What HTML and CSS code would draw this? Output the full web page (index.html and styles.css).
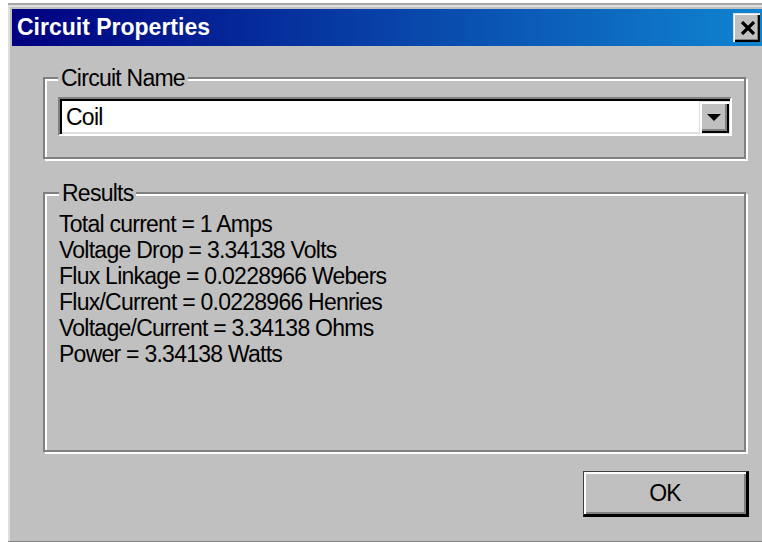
FILE: index.html
```html
<!DOCTYPE html>
<html lang="en">
<head>
<meta charset="utf-8">
<title>Circuit Properties</title>
<link rel="stylesheet" href="styles.css">
</head>
<body>
<div class="window">
  <div class="titlebar">
    <span class="title">Circuit Properties</span>
    <button class="close" type="button" aria-label="Close">
      <svg width="16" height="14" viewBox="0 0 16 14">
        <path d="M2 1 L14 13 M14 1 L2 13" stroke="#000" stroke-width="3.2" fill="none"/>
      </svg>
    </button>
  </div>
  <div class="content">
    <fieldset class="group name-group">
      <legend>Circuit Name</legend>
      <div class="combo">
        <span class="combo-value">Coil</span>
        <span class="combo-btn">
          <svg width="14" height="7" viewBox="0 0 14 7"><polygon points="0,0 14,0 7,7" fill="#000"/></svg>
        </span>
      </div>
    </fieldset>
    <fieldset class="group results-group">
      <legend>Results</legend>
      <ul class="results">
        <li>Total current = 1 Amps</li>
        <li>Voltage Drop = 3.34138 Volts</li>
        <li>Flux Linkage = 0.0228966 Webers</li>
        <li>Flux/Current = 0.0228966 Henries</li>
        <li>Voltage/Current = 3.34138 Ohms</li>
        <li>Power = 3.34138 Watts</li>
      </ul>
    </fieldset>
    <div class="actions">
      <button class="ok" type="button">OK</button>
    </div>
  </div>
</div>
</body>
</html>
```

FILE: styles.css
```css
html, body {
  margin: 0;
  padding: 0;
  background: #fff;
  overflow: hidden;
}

body {
  font-family: "Liberation Sans", Arial, sans-serif;
  font-size: 23px;
  letter-spacing: -0.75px;
  color: #000;
}

/* dialog frame */
.window {
  box-sizing: border-box;
  margin: 3px 0 0 8px;
  width: 754px;
  height: 539px;
  padding: 4px 0 0 4px;
  background: #c0c0c0;
  border-top: 2px solid #a6a6a6;
  border-bottom: 1px solid #808080;
  box-shadow: inset 2px 2px #dfdfdf;
  display: flex;
  flex-direction: column;
  overflow: hidden;
}

.titlebar {
  height: 37px;
  flex: none;
  display: flex;
  align-items: center;
  justify-content: space-between;
  padding: 0 2px 0 5px;
  background: linear-gradient(to right, #000080 0%, #1084d0 100%);
}

.title {
  font-weight: bold;
  font-size: 23px;
  letter-spacing: 0;
  color: #fff;
  line-height: 1;
}

.close {
  width: 27px;
  height: 29px;
  padding: 0 0 0 3px;
  margin: 0;
  border: 0;
  background: #c0c0c0;
  box-shadow: inset 1px 1px #dfdfdf, inset 2px 2px #fff, inset -2px -2px #000, inset -3px -3px #808080;
  display: flex;
  align-items: center;
  justify-content: center;
}

.content {
  flex: 1;
  display: flex;
  flex-direction: column;
}

/* etched group boxes */
.group {
  margin: 0 16px 0 31px;
  border: 2px solid #808080;
  box-shadow: inset 2px 2px #fff, 2px 2px #fff;
  min-width: 0;
}

.group legend {
  font-size: 23px;
  line-height: 28px;
  padding: 0 3px;
  background: #c0c0c0;
}

.name-group {
  margin-top: 18px;
  padding: 5px 12px 21px 13px;
}

.results-group {
  margin-top: 20px;
  padding: 4px 12px 83px 14px;
}

/* drop-down list */
.combo {
  box-sizing: border-box;
  height: 39px;
  display: flex;
  align-items: stretch;
  padding: 2px 1px 1px 2px;
  background: #fff;
  border: 2px solid;
  border-color: #808080 #fff #fff #808080;
  box-shadow: inset 2px 2px #000, inset -2px -2px #dfdfdf;
}

.combo-value {
  flex: 1;
  display: flex;
  align-items: center;
  padding-left: 4px;
  line-height: 1;
}

.combo-btn {
  width: 30px;
  display: flex;
  align-items: center;
  justify-content: center;
  padding-top: 1px;
  background: #c0c0c0;
  box-shadow: inset 1px 1px #dfdfdf, inset 3px 3px #fff, inset -2px -2px #000, inset -4px -4px #808080;
}

.results {
  list-style: none;
  margin: 0;
  padding: 0;
  line-height: 26px;
}

.actions {
  display: flex;
  justify-content: flex-end;
  padding: 19px 13px 0 0;
}

.ok {
  width: 166px;
  height: 46px;
  margin: 0;
  padding: 0;
  font-family: inherit;
  font-size: 23px;
  letter-spacing: -0.75px;
  color: #000;
  background: #c0c0c0;
  border-style: solid;
  border-width: 1px 3px 3px 1px;
  border-color: #404040 #000 #000 #404040;
  box-shadow: inset 2px 2px #fff, inset -2px -2px #808080;
}
```
